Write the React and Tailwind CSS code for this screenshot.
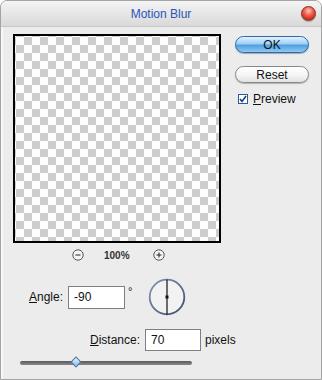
import React from "react";

function CloseDot() {
  return (
    <div className="w-[15px] h-[15px] rounded-full border border-[#8a2a20] bg-[radial-gradient(circle_at_50%_30%,#ffc8bc_0%,#f0604c_40%,#c42a1a_80%,#a81e10_100%)] shadow-[0_1px_1px_rgba(0,0,0,0.25)]" />
  );
}

function RoundIcon({ plus }) {
  return (
    <svg width="12" height="12" viewBox="0 0 12 12">
      <circle cx="6" cy="6" r="5.2" fill="#f4f4f4" stroke="#555" strokeWidth="1" />
      <line x1="3.5" y1="6" x2="8.5" y2="6" stroke="#222" strokeWidth="1" />
      {plus && <line x1="6" y1="3.5" x2="6" y2="8.5" stroke="#222" strokeWidth="1" />}
    </svg>
  );
}

function AngleDial() {
  return (
    <svg width="38" height="38" viewBox="0 0 38 38">
      <defs>
        <linearGradient id="ring" x1="0" y1="0" x2="1" y2="1">
          <stop offset="0" stopColor="#8896b0" />
          <stop offset="1" stopColor="#3e4c6a" />
        </linearGradient>
      </defs>
      <circle cx="19" cy="19" r="17.3" fill="#f2f2f2" stroke="url(#ring)" strokeWidth="1.8" />
      <line x1="19" y1="1.5" x2="19" y2="36.5" stroke="#111" strokeWidth="1.2" />
      <rect x="17.5" y="17.5" width="3" height="3" fill="#111" />
    </svg>
  );
}

export default function App() {
  return (
    <div
      className="w-[322px] h-[380px] bg-[#ececec] border border-[#a4a4a4] rounded-t-[7px] flex flex-col overflow-hidden text-[#111]"
      style={{ fontFamily: '"Liberation Sans", Arial, sans-serif' }}
    >
      {/* Title bar */}
      <div className="h-[26px] shrink-0 grid grid-cols-[1fr_auto_1fr] items-center bg-gradient-to-b from-[#f4f4f4] to-[#d9d9d9] border-b border-[#c8c8c8]">
        <div />
        <span className="text-[12px] text-[#2a55b8] pt-[1px]">Motion Blur</span>
        <div className="flex justify-end pr-[5px]">
          <CloseDot />
        </div>
      </div>

      {/* Body */}
      <div className="flex-1 flex flex-col border-l-2 border-[#f7f7f7] pl-[10px] pt-[7px]">
        <div className="flex">
          <div className="flex flex-col">
            <div className="w-[208px] h-[209px] border-2 border-black bg-[repeating-conic-gradient(#cdcdcd_0_25%,#fdfdfd_0_50%)] bg-[length:16px_16px] bg-[position:1px_1px]" />
            <div className="flex items-center h-[12px] mt-[6px] pl-[59px]">
              <RoundIcon />
              <span className="ml-[20px] text-[10px] font-bold text-[#333]">100%</span>
              <span className="ml-[23px]">
                <RoundIcon plus />
              </span>
            </div>
          </div>

          <div className="flex flex-col ml-[14px] mt-[2px]">
            <button className="w-[74px] h-[17px] rounded-full border border-[#2f69a6] bg-[linear-gradient(#e2f2ff_0%,#9fd0f6_45%,#4f9fe0_55%,#8fcaf6_100%)] text-[12px] leading-none text-[#111] shadow-[0_1px_1px_rgba(0,0,0,0.3)]">
              OK
            </button>
            <button className="w-[74px] h-[17px] mt-[13px] rounded-full border border-[#888] bg-[linear-gradient(#ffffff_0%,#f6f6f6_50%,#e2e2e2_100%)] text-[12px] leading-none text-[#111] shadow-[0_1px_1px_rgba(0,0,0,0.25)]">
              Reset
            </button>
            <label className="flex items-center mt-[7px] ml-[3px] text-[12px]">
              <span className="w-[10px] h-[10px] border border-[#2a5a9a] bg-white flex items-center justify-center">
                <svg width="8" height="8" viewBox="0 0 8 8">
                  <path d="M1 4 L3 6.5 L7 1" fill="none" stroke="#1b3f7a" strokeWidth="1.6" />
                </svg>
              </span>
              <span className="ml-[5px]">
                <span className="underline">P</span>review
              </span>
            </label>
          </div>
        </div>

        {/* Angle */}
        <div className="flex items-center mt-[17px] pl-[16px]">
          <span className="text-[12px]">
            <span className="underline">A</span>ngle:
          </span>
          <div className="ml-[5px] w-[57px] h-[23px] border border-[#7f7f7f] bg-white flex items-center pl-[5px] text-[12px]">
            -90
          </div>
          <span className="self-start text-[11px] ml-[3px] mt-[5px]">°</span>
          <span className="ml-[16px]">
            <AngleDial />
          </span>
        </div>

        {/* Distance */}
        <div className="flex items-center mt-[13px] pl-[77px]">
          <span className="text-[12px]">
            <span className="underline">D</span>istance:
          </span>
          <div className="ml-[5px] w-[56px] h-[22px] border border-[#7f7f7f] bg-white flex items-center pl-[5px] text-[12px]">
            70
          </div>
          <span className="ml-[4px] text-[12px]">pixels</span>
        </div>

        {/* Slider */}
        <div className="relative mt-[10px] ml-[7px] w-[172px] h-[4px] rounded-full bg-gradient-to-b from-[#5a5a5a] to-[#8a8a8a]">
          <span className="absolute left-[52px] top-[-3px] w-[8px] h-[8px] rotate-45 border border-[#4a78a8] bg-gradient-to-br from-[#e8f4ff] to-[#8ab8e4]" />
        </div>
      </div>
    </div>
  );
}
